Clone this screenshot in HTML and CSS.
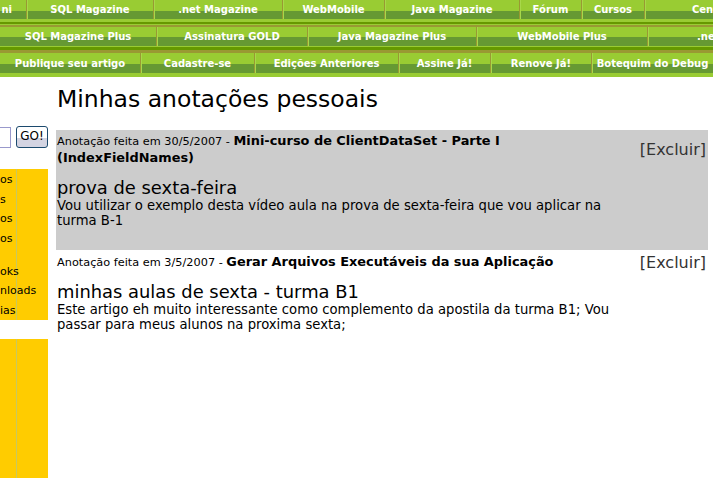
FILE: index.html
```html
<html>
  <head>
    <title>Minhas anotações pessoais</title>
    <link rel="stylesheet" href="styles.css">
  </head>
  <body>
    <div id="page">
      <div class="navrow r1">
        <a class="cell first">ni</a>
        <a class="cell">SQL Magazine</a>
        <a class="cell">.net Magazine</a>
        <a class="cell">WebMobile</a>
        <a class="cell">Java Magazine</a>
        <a class="cell">Fórum</a>
        <a class="cell">Cursos</a>
        <a class="cell">Central</a>
      </div>
      <div class="navsep s1"></div>
      <div class="navrow r2">
        <a class="cell">SQL Magazine Plus</a>
        <a class="cell">Assinatura GOLD</a>
        <a class="cell">Java Magazine Plus</a>
        <a class="cell">WebMobile Plus</a>
        <a class="cell">.net Magazine Plus</a>
      </div>
      <div class="navsep s2"></div>
      <div class="navrow r3">
        <a class="cell">Publique seu artigo</a>
        <a class="cell">Cadastre-se</a>
        <a class="cell">Edições Anteriores</a>
        <a class="cell">Assine Já!</a>
        <a class="cell">Renove Já!</a>
        <a class="cell">Botequim do Debug</a>
      </div>
      <div class="navsep s3"></div>

      <div id="content">
        <div id="sidebar">
          <form class="search">
            <input type="text" class="searchbox">
            <button type="button" class="go">GO!</button>
          </form>
          <div class="menu">
            <a>os</a>
            <a>s</a>
            <a>os</a>
            <a>os</a>
            <span class="spacer"></span>
            <a>oks</a>
            <a>nloads</a>
            <a>ias</a>
          </div>
          <div class="menu lower"></div>
        </div>

        <div id="main">
          <h1>Minhas anotações pessoais</h1>

          <div class="note shaded">
            <div class="head">
              <div class="meta"><span class="when">Anotação feita em 30/5/2007 - </span><b>Mini-curso de ClientDataSet - Parte I (IndexFieldNames)</b></div>
              <a class="excluir">[Excluir]</a>
            </div>
            <div class="title">prova de sexta-feira</div>
            <div class="text">Vou utilizar o exemplo desta vídeo aula na prova de sexta-feira que vou aplicar na turma B-1</div>
          </div>

          <div class="note">
            <div class="head">
              <div class="meta"><span class="when">Anotação feita em 3/5/2007 - </span><b>Gerar Arquivos Executáveis da sua Aplicação</b></div>
              <a class="excluir">[Excluir]</a>
            </div>
            <div class="title second">minhas aulas de sexta - turma B1</div>
            <div class="text">Este artigo eh muito interessante como complemento da apostila da turma B1; Vou passar para meus alunos na proxima sexta;</div>
          </div>
        </div>
      </div>
    </div>
  </body>
</html>
```

FILE: styles.css
```css
body{
  margin:0;
  background:white;
  font-family:"DejaVu Sans",Verdana,sans-serif;
  color:black;
}

#page{
  width:713px;
  overflow:hidden;
}

/* top menus */
.navrow{
  display:grid;
  overflow:hidden;
  white-space:nowrap;
}

.r1{
  height:19px;
  grid-template-columns:26px 127px 129px 102px 135px 62px 63px 136px;
  background:linear-gradient(#99cc33 0 11px,#669933 11px);
}

.r2{
  height:19px;
  border-top:2px solid #999933;
  grid-template-columns:156px 151px 169px 171px 206px;
  background:linear-gradient(#99cc33 0 10px,#669933 10px);
}

.r3{
  height:20px;
  border-top:3px solid #999933;
  grid-template-columns:140px 114px 144px 92px 101px 122px;
  background:linear-gradient(#99cc33 0 11px,#669933 11px);
}

.cell{
  display:flex;
  align-items:center;
  justify-content:center;
  overflow:hidden;
  color:white;
  font-size:10px;
  font-weight:bold;
  border-left:1px solid #999933;
  box-shadow:inset 1px 0 #a8d84a;
}

.navrow .cell:first-child{
  border-left:none;
  box-shadow:none;
}

.cell.first{
  justify-content:flex-end;
  padding-right:14px;
}

.s1{
  height:6px;
  background:linear-gradient(#99cc33 0 3px,#669900 3px 5px,#99cc33 5px);
}

.s2{
  height:4px;
  background:linear-gradient(#99cc33 0 1px,#669900 1px);
}

.s3{
  height:4px;
  background:#99cc33;
}

/* page body */
#content{
  display:flex;
}

#sidebar{
  width:48px;
  margin-right:8px;
  overflow:hidden;
  flex:none;
}

.search{
  display:flex;
  justify-content:flex-end;
  align-items:center;
  gap:5px;
  margin:49px 0 21px;
  height:22px;
}

.searchbox{
  flex:none;
  width:90px;
  height:21px;
  box-sizing:border-box;
  border:1px solid #9999cc;
  padding:0;
}

.go{
  flex:none;
  width:32px;
  height:22px;
  padding:0 0 3px;
  border:1px solid #1c4a6e;
  border-radius:3px;
  background:linear-gradient(white 0 55%,#d4d4e2 55%);
  font-family:"DejaVu Sans",Verdana,sans-serif;
  font-size:12px;
  color:black;
}

.menu{
  display:flex;
  flex-direction:column;
  padding-top:1px;
  background:#ffcc00 linear-gradient(90deg,transparent 16px,#c8c860 16px 17px,transparent 17px);
}

.menu a{
  height:19.5px;
  line-height:19.5px;
  font-size:11px;
  white-space:nowrap;
}

.spacer{
  height:13.5px;
}

.menu.lower{
  margin-top:19px;
  height:200px;
}

#main{
  width:652px;
}

h1{
  margin:8px 0 17px 1px;
  font-size:23.5px;
  font-weight:normal;
  line-height:28px;
}

.note{
  padding:3px 2px 0 1px;
}

.shaded{
  background:#cccccc;
  padding-bottom:22px;
}

.head{
  display:flex;
  align-items:center;
}

.meta{
  width:584px;
  font-size:12.9px;
  line-height:16px;
}

.when{
  font-size:11.3px;
}

.excluir{
  margin-left:auto;
  font-size:16px;
  line-height:19px;
  color:#333;
}

.title{
  margin-top:12px;
  font-size:17.9px;
  line-height:20px;
}

.title.second{
  margin-top:10px;
}

.text{
  width:560px;
  font-size:13.2px;
  line-height:15px;
}
```
